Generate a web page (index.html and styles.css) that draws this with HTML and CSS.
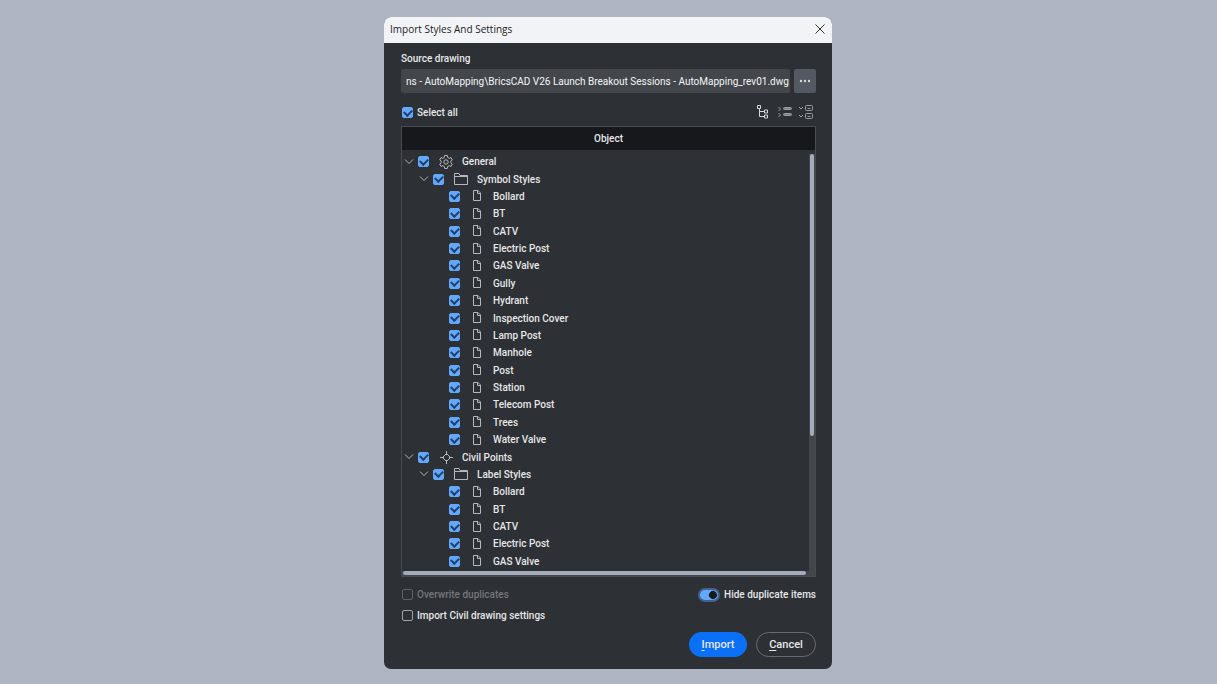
FILE: index.html
```html
<!DOCTYPE html>
<html lang="en">
<head>
    <meta charset="UTF-8">
    <meta name="viewport" content="width=device-width, initial-scale=1.0">
    <title>Import Styles And Settings</title>
    <link rel="stylesheet" href="styles.css">
</head>
<body>
    <svg class="sprite" aria-hidden="true">
        <symbol id="icon-chevron" viewBox="0 0 10 10"><path d="M1 2.500l4 4 4-4"/></symbol>
        <symbol id="icon-gear" viewBox="0 0 16 16">
            <path d="M6.700 1.500h2.600l.4 2 1.400.8 1.900-.7 1.300 2.300-1.500 1.300v1.600l1.500 1.300-1.300 2.300-1.900-.7-1.400.8-.4 2H6.700l-.4-2-1.400-.8-1.900.7-1.300-2.300 1.500-1.300V7.200L1.700 5.900 3 3.600l1.900.7 1.400-.8z"/>
            <circle cx="8" cy="8" r="2.200"/>
        </symbol>
        <symbol id="icon-point" viewBox="0 0 16 16">
            <path d="M8.500 4.500l4 4-4 4-4-4zM8.500 2v4M8.500 11v4M2 8.500h4M11 8.500h4"/>
        </symbol>
        <symbol id="icon-folder" viewBox="0 0 16 16">
            <path d="M1.500 13.500v-11h4.500l1 2h7.500v9zM1.500 5.500h13"/>
        </symbol>
        <symbol id="icon-file" viewBox="0 0 16 16">
            <path d="M4.500 2.500h4.500l2.500 2.500v7.500h-7zM8.500 2.500v3h3"/>
        </symbol>
    </svg>

    <main class="dialog">
        <header class="titlebar">
            <h1>Import Styles And Settings</h1>
            <button class="close" aria-label="Close">
                <svg viewBox="0 0 10 10"><path d="M.5.5l9 9M9.500.5l-9 9"/></svg>
            </button>
        </header>

        <div class="content">
            <label class="source-label" for="source">Source drawing</label>
            <div class="source">
                <input type="text" id="source" value="ns - AutoMapping\BricsCAD V26 Launch Breakout Sessions - AutoMapping_rev01.dwg">
                <button class="browse" aria-label="Browse">
                    <svg viewBox="0 0 12 4"><circle cx="2" cy="2" r="1.200"/><circle cx="6" cy="2" r="1.200"/><circle cx="10" cy="2" r="1.200"/></svg>
                </button>
            </div>

            <div class="toolbar">
                <label class="option"><input type="checkbox" checked> Select all</label>
                <div class="tools">
                    <button aria-label="Tree view">
                        <svg class="bright" viewBox="0 0 16 16"><path d="M1.500 1.500h3v3h-3zM3.500 4.500v8h5M3.500 7.500h5M8.500 6h3v3h-3zM8.500 11h3v3h-3z"/></svg>
                    </button>
                    <button aria-label="Collapse all">
                        <svg viewBox="0 0 16 16"><path d="M1.500 3l2 2-2 2M1.500 9l2 2-2 2"/><rect class="bar" x="6.500" y="3.500" width="8" height="2" rx="1"/><rect class="bar" x="6.500" y="9.500" width="8" height="2" rx="1"/></svg>
                    </button>
                    <button aria-label="Expand all">
                        <svg viewBox="0 0 16 16"><path d="M1 3l2 2 2-2M1 11l2 2 2-2M9.500 4.500h3M9.500 12.500h3"/><rect x="7.500" y="1.500" width="7" height="5" rx="1"/><rect x="7.500" y="9.500" width="7" height="5" rx="1"/></svg>
                    </button>
                </div>
            </div>

            <section class="tree">
                <h2>Object</h2>
                <div class="viewport">
                    <ul class="rows" id="rows"></ul>
                    <div class="scroll-y"><div class="thumb"></div></div>
                </div>
                <div class="scroll-x"><div class="thumb"></div></div>
            </section>

            <div class="options">
                <label class="option disabled"><input type="checkbox" disabled> Overwrite duplicates</label>
                <label class="option"><input type="checkbox" class="switch" checked> Hide duplicate items</label>
            </div>
            <label class="option">
                <input type="checkbox"> Import Civil drawing settings
            </label>

            <footer class="actions">
                <button class="primary"><u>I</u>mport</button>
                <button class="secondary"><u>C</u>ancel</button>
            </footer>
        </div>
    </main>

    <script>
        // level, icon, name
        const items = [
            [0, 'gear', 'General'],
            [1, 'folder', 'Symbol Styles'],
            [2, 'file', 'Bollard'],
            [2, 'file', 'BT'],
            [2, 'file', 'CATV'],
            [2, 'file', 'Electric Post'],
            [2, 'file', 'GAS Valve'],
            [2, 'file', 'Gully'],
            [2, 'file', 'Hydrant'],
            [2, 'file', 'Inspection Cover'],
            [2, 'file', 'Lamp Post'],
            [2, 'file', 'Manhole'],
            [2, 'file', 'Post'],
            [2, 'file', 'Station'],
            [2, 'file', 'Telecom Post'],
            [2, 'file', 'Trees'],
            [2, 'file', 'Water Valve'],
            [0, 'point', 'Civil Points'],
            [1, 'folder', 'Label Styles'],
            [2, 'file', 'Bollard'],
            [2, 'file', 'BT'],
            [2, 'file', 'CATV'],
            [2, 'file', 'Electric Post'],
            [2, 'file', 'GAS Valve']
        ];

        document.getElementById('rows').innerHTML = items.map(([level, icon, name]) => `
            <li class="level-${level}">
                <svg class="chevron"><use href="#icon-chevron"/></svg>
                <label>
                    <input type="checkbox" checked>
                    <svg class="icon"><use href="#icon-${icon}"/></svg>
                    <span>${name}</span>
                </label>
            </li>`).join('');
    </script>
</body>
</html>
```

FILE: styles.css
```css
* {
    box-sizing: border-box;
}

body {
    margin: 0;
    min-height: 100vh;
    padding: 17px 1px 15px 0;
    display: flex;
    justify-content: center;
    align-items: center;
    background: #afb5c3;
    color: #e6e7e9;
    font: 500 10px/14px Roboto, sans-serif;
}

button, input {
    margin: 0;
    font: inherit;
    color: inherit;
}

button {
    padding: 0;
    border: 0;
    background: none;
}

svg {
    display: block;
    fill: none;
    stroke: #b4b9bf;
}

.sprite {
    display: none;
}

.dialog {
    width: 448px;
    max-width: 100%;
    border-radius: 7px;
    overflow: hidden;
    background: #2d3034;
}

.titlebar {
    display: flex;
    align-items: center;
    justify-content: space-between;
    height: 26px;
    padding: 0 7px 2px 6px;
    background: #f2f3f7;
    color: #222;
}

.titlebar h1 {
    margin: 0;
    font: 400 10px/14px "Open Sans", sans-serif;
}

.close svg {
    width: 10px;
    height: 10px;
    stroke: #333;
}

.content {
    padding: 8px 16px 12px 17px;
}

.source-label {
    display: block;
    line-height: 16px;
}

.source {
    display: flex;
    gap: 4px;
    margin-top: 2px;
}

.source input {
    flex: 1;
    min-width: 0;
    height: 24px;
    padding: 0 0 0 5px;
    border: 0;
    border-radius: 2px;
    background: #43474c;
    color: #f4f5f6;
    font-weight: 400;
}

.browse {
    display: flex;
    align-items: center;
    justify-content: center;
    width: 22px;
    border-radius: 2px;
    background: #545961;
}

.browse svg {
    width: 12px;
    height: 4px;
    fill: #d5d7da;
    stroke: none;
}

.toolbar, .options {
    display: flex;
    align-items: center;
    justify-content: space-between;
}

.toolbar {
    height: 33px;
    padding-top: 6px;
}

.tools {
    display: flex;
    gap: 5px;
    padding: 0 2px 2px 0;
}

.tools svg {
    width: 16px;
    height: 16px;
    stroke: #989ea5;
}

.tools .bright {
    stroke: #d5d8dc;
}

.tools .bar {
    fill: #7b838b;
}

/* check boxes */
.option {
    display: flex;
    align-items: center;
    gap: 4px;
    width: fit-content;
    padding-left: 1px;
    line-height: 21px;
}

input[type="checkbox"] {
    appearance: none;
    flex: none;
    display: grid;
    place-items: center;
    width: 11px;
    height: 11px;
    border: 1px solid #a0a4a9;
    border-radius: 2px;
}

input[type="checkbox"]:checked {
    border-color: #64a8fc;
    background: #64a8fc;
}

input[type="checkbox"]:checked::before {
    content: "";
    width: 6px;
    height: 4px;
    margin-top: -2px;
    border: solid #20406a;
    border-width: 0 0 2px 2px;
    transform: rotate(-45deg);
}

.disabled {
    color: #74777b;
}

.disabled input[type="checkbox"] {
    border-color: #5d6165;
}

input[type="checkbox"].switch {
    place-items: center end;
    width: 22px;
    height: 14px;
    padding-right: 1px;
    border: 2px solid #42618b;
    border-radius: 7px;
}

input[type="checkbox"].switch::before {
    width: 8px;
    height: 8px;
    margin: 0;
    border: 0;
    border-radius: 50%;
    background: #17191c;
}

/* object tree */
.tree {
    border: 1px solid #484c51;
}

.tree h2 {
    margin: 0;
    padding-top: 1px;
    background: #17181b;
    font-size: 10px;
    font-weight: 500;
    line-height: 22px;
    text-align: center;
}

.viewport {
    display: flex;
}

.rows {
    flex: 1;
    display: grid;
    grid-auto-rows: 1fr;
    height: 417px;
    margin: 3px 0 1px;
    padding: 0;
    list-style: none;
}

.rows li, .rows label {
    display: flex;
    align-items: center;
}

.rows span {
    padding-top: 1px;
}

.rows .level-0 {
    padding-left: 2px;
}

.rows .level-1 {
    padding-left: 17px;
}

.rows .level-2 {
    padding-left: 33px;
}

.chevron {
    width: 10px;
    height: 10px;
    margin-right: 4px;
}

.level-2 .chevron {
    visibility: hidden;
}

.icon {
    width: 16px;
    height: 16px;
    margin: 0 8px 0 9px;
}

.scroll-y {
    width: 6px;
    padding: 4px 1px 0;
    background: linear-gradient(#2d3034 4px, #43464b 4px);
}

.scroll-y .thumb {
    width: 4px;
    height: 282px;
    border-radius: 2px;
    background: #a2acba;
}

.scroll-x {
    padding: 0 9px 1px 1px;
    background: #43464b;
}

.scroll-x .thumb {
    height: 4px;
    border-radius: 2px;
    background: #a2acba;
}

.options {
    margin-top: 7px;
}

.actions {
    display: flex;
    justify-content: flex-end;
    gap: 9px;
    margin-top: 6px;
}

.actions button {
    height: 25px;
    border-radius: 13px;
    font-size: 11px;
}

.actions u {
    text-underline-offset: 2px;
}

.actions .primary {
    width: 58px;
    background: #0b70f8;
}

.actions .secondary {
    width: 60px;
    border: 1px solid #686c71;
}
```
